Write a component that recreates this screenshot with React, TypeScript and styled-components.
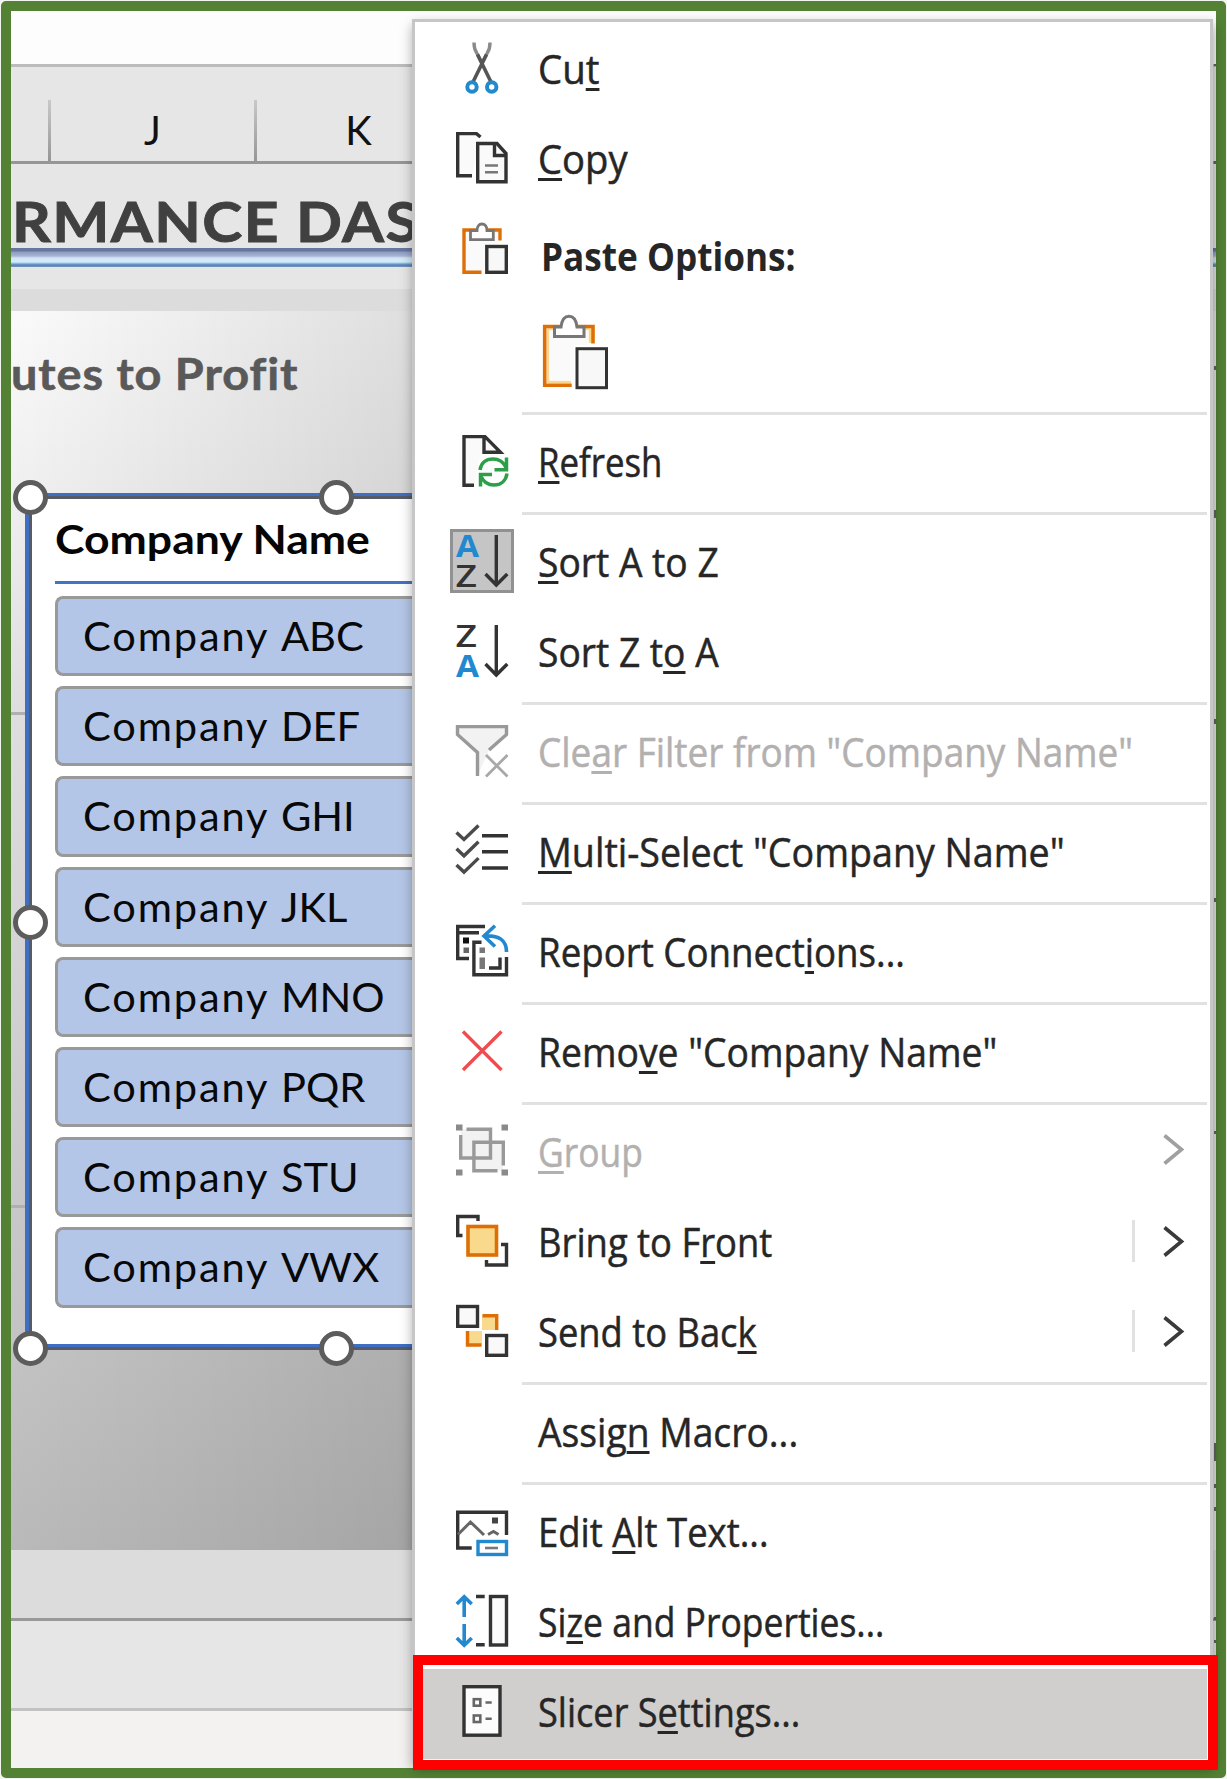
import React from "react";
import styled, { createGlobalStyle, css } from "styled-components";

const GlobalStyle = createGlobalStyle`
  *, *::before, *::after { box-sizing: border-box; }
  html, body { margin: 0; padding: 0; background: #f3f6f0; }
  body { width: 1227px; height: 1779px; overflow: hidden; }
`;

const INK = "#333333";
const GREY = "#999999";
const BLUE = "#2389cf";
const ORANGE = "#dd6f06";
const UI = `"Open Sans", "Noto Sans", sans-serif`;
const OFFICE = `Lato, "Open Sans", sans-serif`;

/* ---------- page ---------- */

const Stage = styled.div`
  position: relative;
  width: 1227px;
  height: 1779px;
  padding: 1px;
  overflow: hidden;
`;

const Frame = styled.div`
  position: relative;
  width: 1225px;
  height: 1777px;
  border: 10px solid #548235;
  border-radius: 5px;
  overflow: hidden;
`;

/* Widens or narrows a run of text from its left edge. */
const Stretch = styled.span<{ $x: number }>`
  display: inline-block;
  transform: scaleX(${(p) => p.$x});
  transform-origin: 0 50%;
`;

/* ---------- worksheet ---------- */

const Sheet = styled.div`
  display: flex;
  flex-direction: column;
  height: 1757px;
  background: #e6e6e6;
`;

const FormulaBar = styled.div`
  height: 56px;
  flex: none;
  background: #fdfdfd;
  border-bottom: 3px solid #bcbcbc;
`;

const ColumnHeads = styled.div`
  display: flex;
  align-items: flex-end;
  height: 97px;
  flex: none;
  background: #e6e6e6;
  border-bottom: 3px solid #969696;
`;

const ColumnHead = styled.div<{ $width: number }>`
  flex: none;
  width: ${(p) => p.$width}px;
  height: 61px;
  border: 0 solid;
  border-right-width: 3px;
  border-image: linear-gradient(#c9c9c9, #959595) 1;
  font: 400 40px/60px ${OFFICE};
  color: #111;
  text-align: center;
`;

const Title = styled.div`
  height: 84px;
  flex: none;
  padding: 23px 0 0 1px;
  font: 700 56px/68px ${OFFICE};
  letter-spacing: 1.3px;
  -webkit-text-stroke: 0.9px #404040;
  color: #404040;
  white-space: nowrap;
`;

const Rule = styled.div`
  height: 19px;
  flex: none;
  background: linear-gradient(
    #66779f 0,
    #66779f 3px,
    #8f9bc2 4px,
    #a6b4d6 8px,
    #d6e4f2 10px,
    #cfeefb 14px,
    #9fc8e6 15px,
    #567fb3 17px,
    #7896bf 19px
  );
`;

const Band = styled.div<{ $height: number; $color: string; $line?: string }>`
  height: ${(p) => p.$height}px;
  flex: none;
  background: ${(p) => p.$color};
  ${(p) => p.$line && css`border-bottom: 3px solid ${p.$line};`}
`;

const Chart = styled.div`
  position: relative;
  display: flex;
  flex-direction: column;
  flex: none;
  width: 402px;
  height: 1239px;
  background:
    linear-gradient(90deg, rgba(0, 0, 0, 0), rgba(0, 0, 0, 0.11)),
    linear-gradient(#fafafa 0%, #f0f0f0 14%, #dfdfdf 31%, #c9c9c9 70%, #c3c3c3 84%, #b9b9b9 100%);
`;

const ChartTitle = styled.div`
  height: 182px;
  flex: none;
  padding-top: 38px;
  font: 700 43px/50px ${OFFICE};
  letter-spacing: 0.9px;
  -webkit-text-stroke: 0.6px #595959;
  color: #595959;
  white-space: nowrap;
`;

const AxisLine = styled.div<{ $top: number }>`
  position: absolute;
  left: 0;
  top: ${(p) => p.$top}px;
  width: 15px;
  height: 3px;
  background: #b0b0b0;
`;

const Slicer = styled.div`
  position: relative;
  margin-left: 14px;
  width: 388px;
  height: 857px;
  flex: none;
  border-top: 3px solid #3f6fc2;
  border-left: 4px solid #3f6fc2;
  background: #fff;
  &::before {
    content: "";
    position: absolute;
    inset: 0;
    border-top: 3px solid #565b66;
    border-left: 3px solid #565b66;
    border-bottom: 3px solid #565b66;
    box-shadow: inset 0 -3px 0 #3f6fc2;
  }
`;

const SlicerHead = styled.div`
  margin: 0 0 12px 26px;
  height: 88px;
  padding-top: 19px;
  border-bottom: 3px solid #4472c4;
  font: 700 40px/48px ${OFFICE};
  color: #050505;
  white-space: nowrap;
`;

const SlicerList = styled.div`
  display: flex;
  flex-direction: column;
  gap: 10px;
  margin-left: 26px;
`;

const SlicerButton = styled.div`
  height: 80.2px;
  padding-left: 25px;
  border: 3px solid #999;
  border-right: 0;
  border-radius: 8px 0 0 8px;
  background: #b4c6e7;
  font: 400 40px/74px ${OFFICE};
  color: #080808;
  white-space: nowrap;
`;

const Word = styled.span`
  letter-spacing: 1.8px;
`;

const Handle = styled.div<{ $x: number; $y: number }>`
  position: absolute;
  left: ${(p) => p.$x - 17.5}px;
  top: ${(p) => p.$y - 17.5}px;
  width: 35px;
  height: 35px;
  border: 5.5px solid #5c5c5c;
  border-radius: 50%;
  background: #fff;
`;

/* ---------- context menu ---------- */

const Menu = styled.div`
  position: absolute;
  left: 412px;
  top: 19px;
  width: 801px;
  height: 1744px;
  padding-top: 1px;
  border: 3px solid #c6c6c6;
  background: #fff;
  box-shadow: 1px 6px 12px rgba(0, 0, 0, 0.36);
`;

const Item = styled.div<{ $disabled?: boolean }>`
  display: flex;
  align-items: center;
  height: 90px;
  padding-left: 36px;
  color: ${(p) => (p.$disabled ? "#b3b0b0" : "#262626")};
  font: 400 40px/54px ${UI};
  white-space: nowrap;
`;

const IconSlot = styled.span<{ $pressed?: boolean }>`
  display: flex;
  align-items: center;
  justify-content: center;
  flex: none;
  width: 64px;
  height: 64px;
  margin: 0 24px 0 -1px;
  ${(p) => p.$pressed && css`border: 3px solid #919191; background: #c5c5c5;`}
  svg { flex: none; overflow: visible; }
`;

const Label = styled.span<{ $heading?: boolean }>`
  flex: 1;
  padding-top: 2px;
  -webkit-text-stroke: 0.5px currentColor;
  ${(p) => p.$heading && css`font-weight: 700; padding: 15px 0 0 3px; -webkit-text-stroke: 0;`}
  u {
    text-decoration: underline;
    text-decoration-thickness: 3px;
    text-underline-offset: 4px;
    text-decoration-skip-ink: none;
  }
`;

const PasteChoice = styled.div`
  display: flex;
  height: 113px;
  padding: 22px 0 0 128px;
  svg { overflow: visible; }
`;

const Separator = styled.div`
  height: 10px;
  margin: 0 3px 0 107px;
  padding-top: 6px;
  &::after {
    content: "";
    display: block;
    height: 3px;
    background: #e1e1e1;
  }
`;

const Submenu = styled.span<{ $split?: boolean; $lift?: number }>`
  display: flex;
  align-items: center;
  justify-content: flex-end;
  width: 53px;
  height: 42px;
  margin-right: 25px;
  margin-top: ${(p) => p.$lift ?? 0}px;
  border-left: ${(p) => (p.$split ? "3px solid #e1e1e1" : "0")};
`;

const Highlight = styled.div`
  margin: 3px 3px 0 8px;
  height: 90px;
  background: #d0cfcd;
  ${Item} { padding-left: 28px; height: 84px; }
`;

const RedBox = styled.div`
  position: absolute;
  left: 413px;
  top: 1655px;
  width: 805px;
  height: 115px;
  border: 10px solid #fe0000;
`;

const EdgeMark = styled.div<{ $y: number; $h: number }>`
  position: absolute;
  left: 1214px;
  top: ${(p) => p.$y}px;
  width: 2px;
  height: ${(p) => p.$h}px;
  background: #555;
`;

/* ---------- icons ---------- */

const Svg = ({ children }: { children: React.ReactNode }) => (
  <svg width="52" height="52" viewBox="0 0 52 52" fill="none" stroke={INK} strokeWidth="3.4">
    {children}
  </svg>
);

const CutIcon = () => (
  <Svg>
    <path d="M18 .5c0 5 .5 7 2.500 10L26 21" stroke="#8a8a8a" />
    <path d="M34 .5c0 5-.5 7-2.500 10L26 21" stroke="#8a8a8a" />
    <path d="M21.500 12.500L35 40M30.500 12.500L17 40" stroke="#555" strokeWidth="3.600" />
    <circle cx="16" cy="45" r="4.700" stroke={BLUE} strokeWidth="4" />
    <circle cx="35.700" cy="45" r="4.700" stroke={BLUE} strokeWidth="4" />
  </Svg>
);

const CopyIcon = () => (
  <Svg>
    <path d="M24.500 5L20.500 1.600H1.700V43.700H16" fill="#fafafa" />
    <path d="M21.700 11.500H41L50 21.500V49.700H21.700Z" fill="#fafafa" />
    <path d="M38.500 11.500V23.500H50" />
    <path d="M29 33.500H42M29 40.300H42" stroke="#777" strokeWidth="2.500" />
  </Svg>
);

const PasteIcon = () => (
  <Svg>
    <path d="M44 18.600V8H8V50.300H25.500" stroke={ORANGE} fill="#fafafa" />
    <path d="M14.500 17.700V8.500H21c0-4 2-6.500 4.900-6.500S31 4.500 31 8.500h6.300v9.200Z" stroke="#777" fill="#fff" strokeWidth="2.800" />
    <rect x="30.800" y="24.500" width="19.500" height="25.800" fill="#f8f8f8" />
  </Svg>
);

const PasteLargeIcon = () => (
  <svg width="65" height="75" viewBox="0 0 65 75" fill="none" strokeWidth="3">
    <path d="M5 68V14H47V28" stroke="#fbd78c" strokeWidth="2.500" />
    <path d="M5 67H28" stroke="#fbd78c" strokeWidth="2.500" />
    <path d="M50 28.500V11.500H1.700V70.300H28.700" stroke={ORANGE} strokeWidth="3.600" />
    <path d="M6.500 15.500H45V30H31V65.500H6.500Z" fill="#fafafa" />
    <path d="M11.500 21.500V12H18c.8-7 3.500-10.800 8-10.800S33.200 5 34 12h7v9.500Z" stroke="#777" fill="#fff" />
    <rect x="34" y="33.700" width="29.500" height="39" stroke={INK} fill="#f8f8f8" />
  </svg>
);

const RefreshIcon = () => (
  <Svg>
    <path d="M18 50.200H8V1.600H29L44.500 17.300H28V2" fill="#fafafa" />
    <g stroke="#2f9e49" strokeWidth="3.500">
      <path d="M24 35C25 28 30 24 37 24c6 0 10.500 3 13 8.500" />
      <path d="M50.500 22.500V34.700H38.500" />
      <path d="M51 38.500C50 45.500 45 50 38 50c-6 0-10.500-3-13-8.500" />
      <path d="M24.500 51.500V39.500H36" />
    </g>
  </Svg>
);

const Glyph = styled.text`
  font-family: ${UI};
  font-size: 31px;
  stroke-width: 0;
`;

const SortIcon = ({ up }: { up?: boolean }) => (
  <Svg>
    <Glyph x={0} y={up ? 51.5 : 22} fill={BLUE} fontWeight={700} textLength={23} lengthAdjust="spacingAndGlyphs">A</Glyph>
    <Glyph x={-0.5} y={up ? 22 : 51.5} fill={INK} fontWeight={600} textLength={21.500} lengthAdjust="spacingAndGlyphs">Z</Glyph>
    <path d="M40.300 0V50M29.500 39L40.300 50L51.300 39" />
  </Svg>
);

const FilterIcon = () => (
  <Svg>
    <path d="M21.500 51V27.500L1.500 9.500V1.600H50.500V9.500L33 25" fill="#f2f2f2" stroke={GREY} />
    <path d="M30 30L51.500 51.500M51.500 30L30 51.500" stroke="#a8a8a8" strokeWidth="2.800" />
  </Svg>
);

const MultiIcon = () => (
  <Svg>
    {[0, 16.3, 32.6].map((y) => (
      <path key={y} d={`M.5 ${y + 7.5}L8 ${y + 14.5}L22.5 ${y + 0.5}`} stroke="#4a4a4a" />
    ))}
    <path d="M26 10.700H52M26 26.800H52M26 43H52" />
  </Svg>
);

const ReportIcon = () => (
  <Svg>
    <path d="M29 1.500H1.700V33.500H13M3 7.700H23" />
    <path d="M7 12.500h6v6H7z" fill="#111" stroke="none" />
    <path d="M7.500 22.500h5.500v5.500H7.500z" fill="#666" stroke="none" />
    <path d="M25.500 17.300H17.900V49.800H50.500V32" />
    <path d="M23.500 22.500h5.500v5.500h-5.500zM23.500 32.500h5.500V44h-5.500z" fill="#777" stroke="none" />
    <path d="M33 43H44V32.500" />
    <path d="M39 .8L28 11L39 21.500M28 11C43 10 50.500 15 50.500 27" stroke={BLUE} strokeWidth="3.600" />
  </Svg>
);

const RemoveIcon = () => (
  <Svg>
    <path d="M7 6.500L45.500 45M45.500 6.500L7 45" stroke="#ee4c4e" strokeWidth="3.300" />
  </Svg>
);

const GroupIcon = () => (
  <Svg>
    <path d="M4.700 4H34.500V17.300H47V45.700H17.900V33H4.700Z" fill="#f2f2f2" stroke="none" />
    <g stroke={GREY}>
      <path d="M10.500 4.200H34.500V33H4.700V10" />
      <path d="M41.500 45.700H17.900V17.300H47.300V40.500" />
    </g>
    <path d="M0-.5h6.500v6H0zM45.500-.5H52v6h-6.500zM0 44.500h6.500v6H0zM45.500 44.500H52v6h-6.500z" fill="#8a8a8a" stroke="none" />
  </Svg>
);

const FrontIcon = () => (
  <Svg>
    <path d="M22 6V1.500H1.700V20.500H6.500" />
    <rect x="12" y="11.500" width="28.500" height="28.500" fill="#f9da8c" stroke={ORANGE} strokeWidth="3.600" />
    <path d="M45 29.500H50.500V50H30.500V45" />
  </Svg>
);

const BackIcon = () => (
  <Svg>
    <path d="M26 10H41V25H26ZM11 26H26V41H11Z" fill="#f9da8c" stroke="none" />
    <path d="M26.500 10.800H40.700V25M11.500 26V40H25.500" stroke={ORANGE} />
    <rect x="1.700" y="1.500" width="19.800" height="19.800" fill="#f9f9f9" />
    <rect x="30.700" y="30.500" width="19.800" height="19.800" fill="#f9f9f9" />
  </Svg>
);

const AltTextIcon = () => (
  <Svg>
    <path d="M15.700 43H1.700V7.300H50.500V30" />
    <path d="M36 12.500h6v6h-6z" fill="#444" stroke="none" />
    <path d="M2 29.500L14.500 17L28 30M32 29.500L37.500 26.500L42.500 29.500" stroke="#666" strokeWidth="3" />
    <rect x="22" y="36.500" width="28.500" height="13" stroke={BLUE} fill="#fff" />
    <path d="M29 43H42" stroke="#777" strokeWidth="2.600" />
  </Svg>
);

const SizeIcon = () => (
  <Svg>
    <path d="M8.200 22V2M.8 9L8.200 1.700L15.700 9M8.200 29V49M.8 43L8.200 50.200L15.700 43" stroke={BLUE} strokeWidth="3.600" />
    <path d="M20 1.500H28.700M20 49.800H28.700" />
    <rect x="34.500" y="1.500" width="16" height="48.500" fill="#fafafa" />
  </Svg>
);

const SettingsIcon = () => (
  <Svg>
    <rect x="8" y="1.700" width="36" height="48.500" fill="#fcfcfc" />
    <g stroke="#666" strokeWidth="2.600">
      <rect x="17.800" y="14.200" width="6.500" height="6.500" />
      <rect x="17.800" y="30.500" width="6.500" height="6.500" />
      <path d="M29.500 17.500H35.700M29.500 33.800H35.700" />
    </g>
  </Svg>
);

const Chevron = ({ color }: { color: string }) => (
  <svg width="22" height="32" viewBox="0 0 22 32" fill="none">
    <path d="M1.500 2.500L18.500 16.500L1.500 30.500" stroke={color} strokeWidth="3.600" />
  </svg>
);

/* ---------- data ---------- */

const companies = ["ABC", "DEF", "GHI", "JKL", "MNO", "PQR", "STU", "VWX"];
const handles = [[19, 486], [325.5, 486], [19, 911.5], [19, 1337], [325.5, 1337]];
const marks = [[64, 2], [161, 3], [366, 4], [510, 8], [719, 5], [898, 4], [1131, 3], [1443, 18], [1484, 4], [1507, 4], [1617, 3], [1640, 3]];

type Entry = {
  key: string;
  icon?: React.ReactNode;
  label: React.ReactNode;
  stretch: number;
  heading?: boolean;
  pressed?: boolean;
  disabled?: boolean;
  submenu?: "plain" | "split";
};

const clipboard: Entry[] = [
  { key: "cut", icon: <CutIcon />, label: <>Cu<u>t</u></>, stretch: 0.96 },
  { key: "copy", icon: <CopyIcon />, label: <><u>C</u>opy</>, stretch: 0.955 },
  { key: "paste", icon: <PasteIcon />, label: <>Paste Options:</>, stretch: 0.879, heading: true },
];

const groups: Entry[][] = [
  [{ key: "refresh", icon: <RefreshIcon />, label: <><u>R</u>efresh</>, stretch: 0.87 }],
  [
    { key: "az", icon: <SortIcon />, label: <><u>S</u>ort A to Z</>, stretch: 0.93, pressed: true },
    { key: "za", icon: <SortIcon up />, label: <>Sort Z t<u>o</u> A</>, stretch: 0.93 },
  ],
  [{ key: "clear", icon: <FilterIcon />, label: <>Cle<u>a</u>r Filter from "Company Name"</>, stretch: 0.924, disabled: true }],
  [{ key: "multi", icon: <MultiIcon />, label: <><u>M</u>ulti-Select "Company Name"</>, stretch: 0.94 }],
  [{ key: "report", icon: <ReportIcon />, label: <>Report Connect<u>i</u>ons...</>, stretch: 0.917 }],
  [{ key: "remove", icon: <RemoveIcon />, label: <>Remo<u>v</u>e "Company Name"</>, stretch: 0.932 }],
  [
    { key: "group", icon: <GroupIcon />, label: <><u>G</u>roup</>, stretch: 0.885, disabled: true, submenu: "plain" },
    { key: "front", icon: <FrontIcon />, label: <>Bring to F<u>r</u>ont</>, stretch: 0.91, submenu: "split" },
    { key: "back", icon: <BackIcon />, label: <>Send to Bac<u>k</u></>, stretch: 0.908, submenu: "split" },
  ],
  [{ key: "macro", label: <>Assig<u>n</u> Macro...</>, stretch: 0.931 }],
  [
    { key: "alt", icon: <AltTextIcon />, label: <>Edit <u>A</u>lt Text...</>, stretch: 0.912 },
    { key: "size", icon: <SizeIcon />, label: <>Si<u>z</u>e and Properties...</>, stretch: 0.887 },
  ],
];

const settings: Entry = {
  key: "settings",
  icon: <SettingsIcon />,
  label: <>Slicer S<u>e</u>ttings...</>,
  stretch: 0.903,
};

const MenuItem = ({ entry }: { entry: Entry }) => (
  <Item $disabled={entry.disabled}>
    <IconSlot $pressed={entry.pressed}>{entry.icon}</IconSlot>
    <Label $heading={entry.heading}>
      <Stretch $x={entry.stretch}>{entry.label}</Stretch>
    </Label>
    {entry.submenu && (
      <Submenu $split={entry.submenu === "split"} $lift={entry.disabled ? -5 : 0}>
        <Chevron color={entry.disabled ? "#a0a0a0" : "#3a3a3a"} />
      </Submenu>
    )}
  </Item>
);

export default function App() {
  return (
    <Stage>
      <GlobalStyle />
      <Frame>
        <Sheet>
          <FormulaBar />
          <ColumnHeads>
            <ColumnHead $width={40} />
            <ColumnHead $width={206}>J</ColumnHead>
            <ColumnHead $width={206}>K</ColumnHead>
          </ColumnHeads>
          <Title><Stretch $x={1.08}>RMANCE DAS</Stretch></Title>
          <Rule />
          <Band $height={22} $color="#e6e6e6" />
          <Band $height={22} $color="#dcdcdc" />
          <Chart>
            <AxisLine $top={401} />
            <AxisLine $top={894} />
            <ChartTitle><Stretch $x={1.088}>utes to Profit</Stretch></ChartTitle>
            <Slicer>
              <SlicerHead><Stretch $x={1.113}>Company Name</Stretch></SlicerHead>
              <SlicerList>
                {companies.map((c) => (
                  <SlicerButton key={c}>
                    <Stretch $x={1.04}><Word>Company </Word>{c}</Stretch>
                  </SlicerButton>
                ))}
              </SlicerList>
            </Slicer>
          </Chart>
          <Band $height={71} $color="#dcdcdc" $line="#999" />
          <Band $height={90} $color="#e6e6e6" $line="#c2c2c2" />
          <Band $height={60} $color="#f3f2f1" />
        </Sheet>
        {handles.map(([x, y]) => (
          <Handle key={`${x}-${y}`} $x={x} $y={y} />
        ))}
      </Frame>
      <Menu>
        {clipboard.map((entry) => (
          <MenuItem key={entry.key} entry={entry} />
        ))}
        <PasteChoice><PasteLargeIcon /></PasteChoice>
        {groups.map((entries) => (
          <React.Fragment key={entries[0].key}>
            <Separator />
            {entries.map((entry) => (
              <MenuItem key={entry.key} entry={entry} />
            ))}
          </React.Fragment>
        ))}
        <Highlight>
          <MenuItem entry={settings} />
        </Highlight>
      </Menu>
      {marks.map(([y, h]) => (
        <EdgeMark key={y} $y={y} $h={h} />
      ))}
      <RedBox />
    </Stage>
  );
}
